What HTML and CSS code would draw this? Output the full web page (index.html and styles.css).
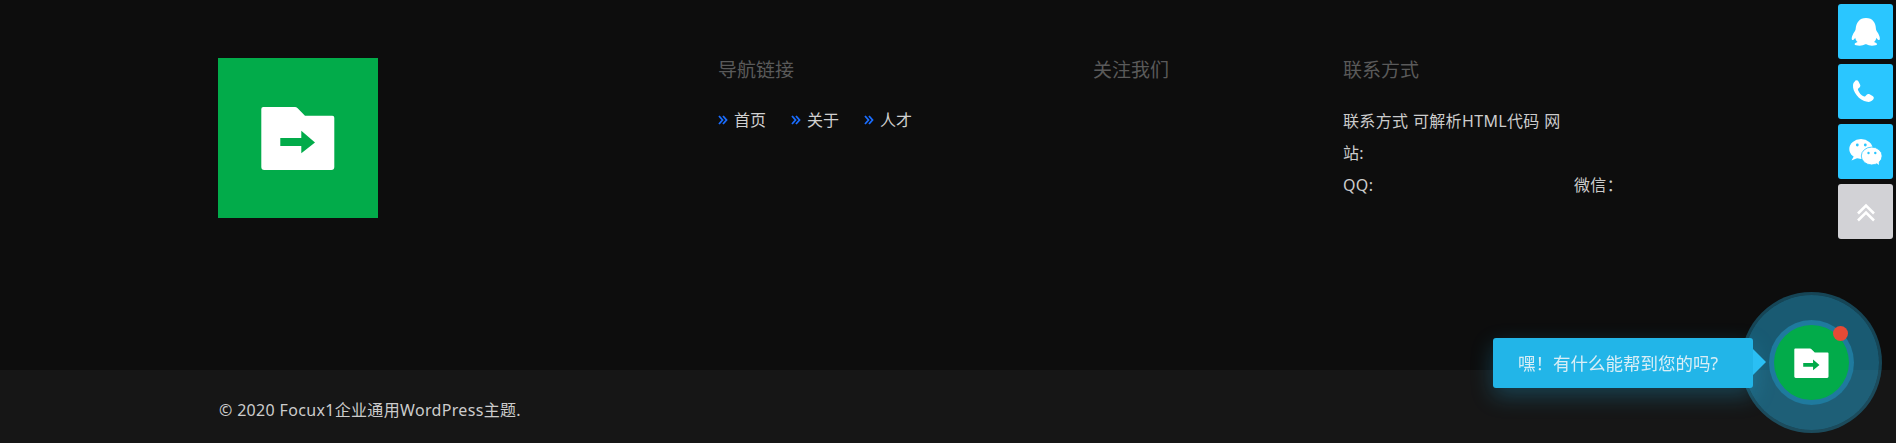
FILE: index.html
```html
<!DOCTYPE html>
<html lang="zh-CN">
<head>
<meta charset="utf-8">
<title>Focux1</title>
<link rel="stylesheet" href="styles.css">
</head>
<body>
<svg class="defs" width="0" height="0" aria-hidden="true">
  <symbol id="folder" viewBox="0 0 160 160">
    <path fill="#fff" d="M45.300 49h31.700a4 4 0 0 1 2.400.9L87 57.700h27.300a2 2 0 0 1 2 2v49.300a3 3 0 0 1-3 3H46.300a3 3 0 0 1-3-3V51a2 2 0 0 1 2-2z"/>
    <path fill="#02ab4a" d="M62.300 80h21v-7.300L97 84.500 83.300 95.300V88h-21z"/>
  </symbol>
</svg>
<footer class="footer">
  <div class="footer-main">
    <div class="brand">
      <svg class="logo" viewBox="0 0 160 160"><use href="#folder"/></svg>
    </div>
    <section class="col col-nav">
      <h3 class="col-title">导航链接</h3>
      <ul class="nav-links">
        <li class="nav-item"><svg class="chev" viewBox="0 0 10 10"><path d="M1 1l3.500 4L1 9M5 1l3.500 4L5 9"/></svg>首页</li>
        <li class="nav-item"><svg class="chev" viewBox="0 0 10 10"><path d="M1 1l3.500 4L1 9M5 1l3.500 4L5 9"/></svg>关于</li>
        <li class="nav-item"><svg class="chev" viewBox="0 0 10 10"><path d="M1 1l3.500 4L1 9M5 1l3.500 4L5 9"/></svg>人才</li>
      </ul>
    </section>
    <section class="col col-follow">
      <h3 class="col-title">关注我们</h3>
    </section>
    <section class="col col-contact">
      <h3 class="col-title">联系方式</h3>
      <div class="contact-grid">
        <p class="contact-text contact-wide">联系方式 可解析HTML代码 网站:</p>
        <p class="contact-text contact-qq">QQ:</p>
        <p class="contact-text">微信：</p>
      </div>
    </section>
  </div>
  <div class="footer-bottom">
    <p class="copyright">© 2020 Focux1企业通用WordPress主题.</p>
  </div>
</footer>

<aside class="side-tools">
  <a class="tool tool-blue">
    <svg class="tool-icon" viewBox="0 0 55 55"><path fill="#fff" d="M28 14c6.800 0 9.700 5 9.900 10.500.1 2 .9 2.700 1.900 4.300 1.700 2.700 2.700 6.300 1.600 7.200-.7.500-2-.6-3-2.200-.3 1.700-1.200 3.200-2.400 4.300 1.700.6 3 1.300 3 2.200 0 1-2.500 1.400-5 1.400-2.200 0-4.300-.6-5.600-1.400h-1.200c-1.300.8-3.400 1.400-5.600 1.400-2.500 0-5-.4-5-1.400 0-.9 1.300-1.600 3-2.200-1.200-1.100-2.100-2.600-2.400-4.300-1 1.600-2.300 2.700-3 2.200-1.100-.9-.1-4.500 1.600-7.200 1-1.600 1.800-2.300 1.900-4.300C18.300 19 21.200 14 28 14z"/></svg>
  </a>
  <a class="tool tool-blue">
    <svg class="tool-icon" viewBox="0 0 55 55"><path fill="#fff" transform="translate(-1.500 0)" d="M18.500 16.800c1.300-.9 2.800-.7 3.500.6l1.500 3.100c.6 1.100.4 2.200-.5 3l-1.200 1.100c-.4.400-.5.800-.3 1.300 1.200 3 3.100 5.200 6.100 6.600.5.200.9.100 1.200-.3l1.400-1.500c.8-.8 1.800-.9 2.900-.4l3 1.700c1.400.8 1.600 2.300.6 3.500-1.600 1.800-3.600 2.700-6 2.300-4.300-.8-7.800-3-10.500-6.500-2.500-3.200-4-6.600-3.700-10.200.2-1.700.9-3 2-3.800z"/></svg>
  </a>
  <a class="tool tool-blue">
    <svg class="tool-icon" viewBox="0 0 55 55">
      <ellipse cx="23" cy="25" rx="11.700" ry="10" fill="#fff"/>
      <path fill="#fff" d="M16 32l-2.500 4.500 6-2.500z"/>
      <ellipse cx="33.700" cy="32" rx="10.400" ry="8.900" fill="#fff" stroke="#2ac6ff" stroke-width=".8"/>
      <path fill="#fff" d="M37 38l4 3-.5-5z"/>
      <circle cx="19.300" cy="21" r="1.400" fill="#2ac6ff"/><circle cx="27.300" cy="21" r="1.400" fill="#2ac6ff"/>
      <circle cx="30.500" cy="29" r="1.200" fill="#2ac6ff"/><circle cx="37.300" cy="29" r="1.200" fill="#2ac6ff"/>
    </svg>
  </a>
  <a class="tool tool-gray">
    <svg class="tool-icon" viewBox="0 0 55 55"><path fill="none" stroke="#fff" stroke-width="2.600" d="M20 29.500l8-8 8 8M20 36.500l8-8 8 8"/></svg>
  </a>
</aside>

<div class="chat">
  <div class="chat-tip">嘿！有什么能帮到您的吗?</div>
  <div class="chat-disc">
    <div class="chat-ring">
      <div class="chat-btn"><svg class="chat-icon" viewBox="0 0 160 160"><use href="#folder"/></svg></div>
      <span class="chat-dot"></span>
    </div>
  </div>
</div>
</body>
</html>
```
FILE: styles.css
```css
* { box-sizing: border-box; }
html, body { margin: 0; padding: 0; height: 443px; overflow: hidden; background: #0d0d0d; }
body { font-family: "Noto Sans", "Noto Sans CJK SC", sans-serif; font-size: 16px; color: #ccc; }
.defs { display: block; height: 0; }
.footer { display: flex; flex-direction: column; height: 443px; }
.footer-main { flex: 1; display: grid; grid-template-columns: 500px 375px 250px 500px; padding: 58px 0 0 218px; background: #0d0d0d; }
.logo { display: block; width: 160px; height: 160px; background: #02ab4a; }
.col-title { margin: 0 0 26px; font-size: 19px; line-height: 24px; font-weight: 400; color: #5a5a5a; }
.nav-links { display: flex; gap: 25px; margin: 0; padding: 0; list-style: none; }
.nav-item { display: flex; align-items: center; gap: 6px; line-height: 24px; color: #d0d0d0; }
.chev { width: 10px; height: 10px; fill: none; stroke: #1a6dff; stroke-width: 1.800; }
.contact-grid { display: grid; grid-template-columns: 231px 231px; margin-top: -3px; }
.contact-text { margin: 0; line-height: 32px; color: #ccc; letter-spacing: .35px; }
.contact-wide { grid-column: 1 / 3; width: 225px; }
.footer-bottom { height: 73px; padding: 7px 0 0 219px; background: #161616; display: flex; align-items: center; }
.copyright { margin: 0; line-height: 24px; color: #ccc; letter-spacing: .33px; }
.side-tools { position: fixed; top: 4px; right: 3px; display: flex; flex-direction: column; gap: 5px; }
.tool { display: block; width: 55px; height: 55px; border-radius: 3px; }
.tool-blue { background: #2ac6ff; }
.tool-gray { background: #d2d2d6; }
.tool-icon { display: block; width: 55px; height: 55px; }
.chat { position: fixed; left: 1493px; top: 291px; width: 390px; height: 144px; display: flex; align-items: center; }
.chat-tip { position: relative; z-index: 2; width: 260px; height: 50px; padding-left: 25px; border-radius: 3px; background: #22b5e8; color: #d8eef6; font-size: 17.500px; line-height: 50px; box-shadow: 0 8px 22px rgba(34, 181, 232, .28); }
.chat-tip::after { content: ""; position: absolute; left: 260px; top: 11px; border-style: solid; border-width: 13px 0 13px 13px; border-color: transparent transparent transparent #2abff4; }
.chat-disc { position: absolute; left: 248px; top: 1px; width: 141px; height: 141px; border-radius: 50%; background: rgba(42, 198, 255, .42); border: 3px solid rgba(42, 198, 255, .3); background-clip: padding-box; display: flex; align-items: center; justify-content: center; }
.chat-ring { position: relative; width: 85px; height: 85px; border-radius: 50%; background: #1f7a9e; display: flex; align-items: center; justify-content: center; }
.chat-btn { width: 75px; height: 75px; border-radius: 50%; background: #02ab4a; display: flex; align-items: center; justify-content: center; }
.chat-icon { display: block; width: 76px; height: 76px; }
.chat-dot { position: absolute; right: 6px; top: 6px; width: 15px; height: 15px; border-radius: 50%; background: #e64a35; }
```
